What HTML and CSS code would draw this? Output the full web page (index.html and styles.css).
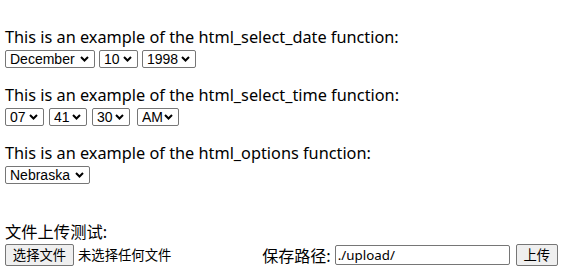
FILE: index.html
```
<!DOCTYPE html>
<html lang="zh">
<head>
  <meta charset="UTF-8" />
  <title>Smarty demo</title>
  <link rel="stylesheet" href="styles.css">
</head>
<body>
  <div class="group first">
    <div class="caption">This is an example of the html_select_date function:</div>
    <div class="controls">
      <select class="w-month"><option>December</option></select>
      <select class="w-day"><option>10</option></select>
      <select class="w-year"><option>1998</option></select>
    </div>
  </div>

  <div class="group">
    <div class="caption">This is an example of the html_select_time function:</div>
    <div class="controls">
      <select class="w-hour"><option>07</option></select>
      <select class="w-min"><option>41</option></select>
      <select class="w-sec"><option>30</option></select>
      <select class="w-ampm"><option>AM</option></select>
    </div>
  </div>

  <div class="group">
    <div class="caption">This is an example of the html_options function:</div>
    <div class="controls">
      <select class="w-state"><option>Nebraska</option></select>
    </div>
  </div>

  <form class="group upload">
    <div class="caption">文件上传测试:</div>
    <div class="upload-row">
      <button type="button" class="file-btn">选择文件</button>
      <span class="file-name">未选择任何文件</span>
      <label class="path-label" for="path">保存路径:</label>
      <input type="text" id="path" name="path" value="./upload/" />
      <button type="submit" class="submit-btn">上传</button>
    </div>
  </form>
</body>
</html>
```

FILE: styles.css
```
body {
  margin: 0;
  padding: 0 5px;
  font-family: "Noto Sans", "Noto Sans CJK SC", sans-serif;
  font-size: 16.3px;
  color: #000;
  background: #fff;
}
.group {
  margin-top: 17px;
}
.group.first {
  margin-top: 27px;
}
.group.upload {
  margin-top: 38px;
}
.caption {
  line-height: 21px;
  height: 21px;
}
.controls {
  display: flex;
  gap: 4px;
  margin-top: 2px;
}
select {
  -webkit-appearance: none;
  appearance: none;
  height: 18px;
  box-sizing: border-box;
  font-family: "Liberation Sans", Arial, sans-serif;
  font-size: 14px;
  line-height: 16px;
  padding: 0 14px 0 4px;
  border: 1px solid #767676;
  border-radius: 2px;
  color: #000;
  background: #fff url("data:image/svg+xml;utf8,<svg xmlns='http://www.w3.org/2000/svg' width='9' height='6' viewBox='0 0 9 6'><path d='M1 1l3.5 3.5L8 1' fill='none' stroke='black' stroke-width='2'/></svg>") no-repeat right 5px center;
}
.w-month { width: 90px; }
.w-day { width: 39px; }
.w-year { width: 54px; }
.w-hour { width: 39px; }
.w-min { width: 38px; margin-left: 1px; }
.w-sec { width: 38px; margin-left: 1px; }
.w-ampm { width: 42px; margin-left: 3px; }
.w-state { width: 85px; }

.upload-row {
  display: flex;
  align-items: center;
  height: 23px;
  font-size: 13.33px;
}
.file-btn,
.submit-btn {
  height: 22px;
  padding: 0 6px;
  font-family: "Noto Sans CJK SC", sans-serif;
  font-size: 13.33px;
  background: #efefef;
  border: 1px solid #767676;
  border-radius: 2px;
  color: #000;
}
.file-btn {
  width: 69px;
}
.file-name {
  margin-left: 4px;
  font-family: "Noto Sans CJK SC", sans-serif;
}
.path-label {
  margin-left: 91px;
  font-family: "Noto Sans CJK SC", sans-serif;
  font-size: 16px;
}
input[type="text"] {
  width: 175px;
  height: 20px;
  box-sizing: border-box;
  margin-left: 4px;
  padding: 0 2px;
  font-family: "Noto Sans", sans-serif;
  font-size: 13.33px;
  border: 1px solid #767676;
  border-radius: 2px;
}
.submit-btn {
  margin-left: 6px;
  width: 42px;
}
```
